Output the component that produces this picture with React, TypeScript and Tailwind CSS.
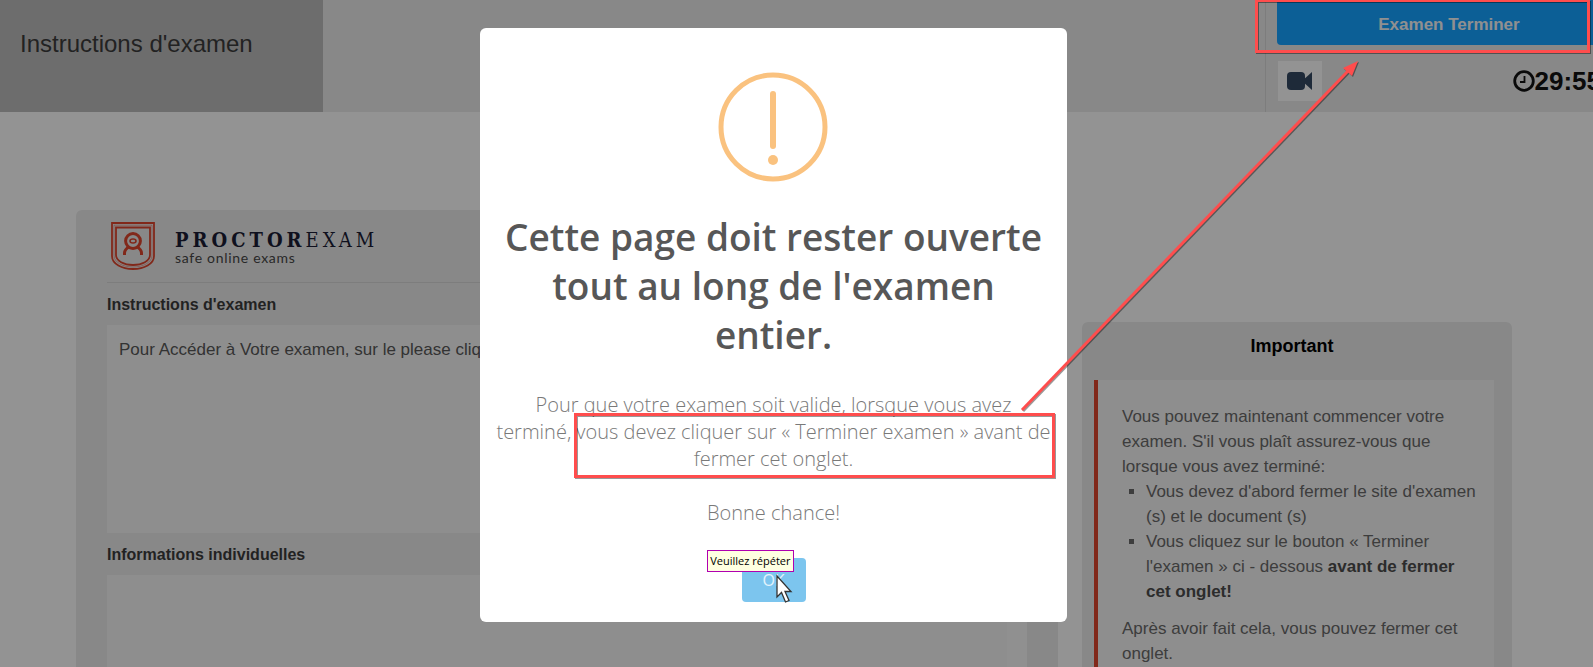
function Logo() {
  return (
    <div className="flex items-center gap-5 pl-1">
      <svg className="h-12 w-11 shrink-0" viewBox="0 0 44 48" fill="none" stroke="#d8432c">
        <path d="M1 1H43V34C43 42 33 47 22 47C11 47 1 42 1 34Z" strokeWidth="1.8" />
        <path d="M5 5.5H39V33C39 39 31 43 22 43C13 43 5 39 5 33Z" strokeWidth="1.8" />
        <path d="M3 3.2H41V33.5C41 40.5 32 45 22 45C12 45 3 40.5 3 33.5Z" strokeWidth="1" opacity="0.4" />
        <circle cx="22" cy="19" r="7.4" strokeWidth="3" />
        <ellipse cx="22" cy="19" rx="3" ry="2" strokeWidth="1.6" />
        <path d="M13.5 33V31C13.5 28 16 26 18.5 24.5M30.5 33V31C30.5 28 28 26 25.5 24.5" strokeWidth="3" />
      </svg>
      <div className="pt-1 text-[#1a1b33]">
        <div className="font-['DejaVu_Serif_Condensed','DejaVu_Serif',serif] text-xl leading-5 tracking-[0.2em]">
          <b>PROCTOR</b>EXAM
        </div>
        <div className="font-[Lato,sans-serif] text-sm leading-4 tracking-wider text-[#444]">
          safe online exams
        </div>
      </div>
    </div>
  );
}

function Header() {
  return (
    <header className="flex h-28 bg-[#e3e3e3]">
      <div className="w-[323px] shrink-0 bg-[#b6b6b6] px-5 pt-7">
        <h1 className="text-2xl leading-8 text-[#3a3a3a]">Instructions d'examen</h1>
      </div>
      <div className="ml-auto w-[328px] shrink-0 overflow-hidden border-l border-[#d0d0d0] pl-[11px]">
        <div className="w-[344px]">
          <button className="h-[45px] w-full rounded-b-sm bg-[#149efb] pt-1 text-[17px] font-bold text-[#f0f0f0]">
            Examen Terminer
          </button>
          <div className="mt-4 flex items-center justify-between pr-5">
            <button aria-label="Caméra" className="ml-px flex h-10 w-11 items-center justify-center bg-[#f5f5f5]">
              <svg className="h-5 w-7" viewBox="0 0 28 20" fill="#33475f">
                <rect x="1" y="1" width="18" height="18" rx="4" />
                <path d="M16 10L26 1V19Z" />
              </svg>
            </button>
            <div className="flex items-center text-[26px] leading-8 font-bold text-[#111]">
              <svg className="h-[22px] w-[22px]" viewBox="0 0 22 22" fill="none" stroke="#111">
                <circle cx="11" cy="11" r="9.3" strokeWidth="2.8" />
                <path d="M11.5 6V12H7" strokeWidth="1.8" />
              </svg>
              29:55
            </div>
          </div>
        </div>
      </div>
    </header>
  );
}

function ImportantCard() {
  return (
    <aside className="mt-28 w-[430px] shrink-0 rounded-md bg-[#e3e3e3] pt-3 pr-[18px] pb-10 pl-3">
      <h2 className="pr-1 text-center text-lg leading-6 font-bold text-black">Important</h2>
      <div className="mt-[22px] border-l-4 border-[#d8432c] bg-[#ededed] pt-6 pr-3 pb-10 pl-6 text-[17px] leading-[25px] text-[#666]">
        <p>
          Vous pouvez maintenant commencer votre examen. S'il vous plaît assurez-vous que lorsque vous avez terminé:
        </p>
        <ul className="list-[square] pl-6">
          <li>Vous devez d'abord fermer le site d'examen (s) et le document (s)</li>
          <li>
            Vous cliquez sur le bouton « Terminer l'examen » ci - dessous{" "}
            <b className="text-[#4a4a4a]">avant de fermer cet onglet!</b>
          </li>
        </ul>
        <p className="mt-3">Après avoir fait cela, vous pouvez fermer cet onglet.</p>
      </div>
    </aside>
  );
}

function Modal() {
  return (
    <div className="absolute inset-0 flex items-start justify-center bg-black/40 pt-7 pr-[46px] font-['Open_Sans',sans-serif]">
      <div role="dialog" className="flex w-[587px] flex-col items-center rounded-md bg-white px-4 pt-11 pb-5 text-center">
        <svg className="h-28 w-28" viewBox="0 0 112 112" fill="none">
          <circle cx="55" cy="55" r="52" stroke="#fac27f" strokeWidth="5" />
          <path d="M55 22V74" stroke="#fac27f" strokeWidth="6" strokeLinecap="round" />
          <circle cx="55" cy="88" r="5" fill="#fac27f" />
        </svg>
        <h2 className="mt-7 text-[37px] leading-[49px] font-semibold text-[#575757]">
          Cette page doit rester ouverte tout au long de l'examen entier.
        </h2>
        <div className="mt-8 text-xl leading-[27px] font-light text-[#797979]">
          <p>
            Pour que votre examen soit valide, lorsque vous avez terminé, vous devez cliquer sur « Terminer examen »
            avant de fermer cet onglet.
          </p>
          <p className="mt-[27px]">Bonne chance!</p>
        </div>
        <div className="relative mt-8">
          <button className="h-11 w-16 rounded-sm bg-[#7cc5ee] text-base font-medium text-white/80">OK</button>
          <span
            role="tooltip"
            className="absolute -top-2 right-3 border border-[#b000b0] bg-[#ffffe1] px-[2px] text-[11px] leading-5 whitespace-nowrap text-black"
          >
            Veuillez répéter
          </span>
          <svg className="absolute top-4 left-8 h-8 w-5" viewBox="0 0 20 32" fill="#fff" stroke="#333" strokeWidth="1.3">
            <path d="M3 2V23L7.5 18.5L11.5 28L15 26.5L11 17.5H17Z" />
          </svg>
        </div>
      </div>
    </div>
  );
}

// red frames and arrow pointing from the modal text to the button
function Annotations() {
  return (
    <svg className="pointer-events-none absolute top-0 right-0 h-[667px] w-[1593px] drop-shadow-[1px_1px_0px_rgba(0,0,0,0.4)]" viewBox="0 0 1593 667" fill="none">
      <g stroke="#ff4d4d" strokeWidth="3">
        <rect x="1256.5" y="0.5" width="332" height="51" />
        <rect x="575.5" y="414.5" width="478" height="62" />
        <path d="M1022 410L1349 70" />
      </g>
      <path d="M1358 61L1352 76L1343 68Z" fill="#ff4d4d" />
    </svg>
  );
}

export default function App() {
  return (
    <div className="relative h-screen overflow-hidden bg-[#f5f5f5] font-['Liberation_Sans',Arial,sans-serif]">
      <Header />
      <main className="flex items-start gap-6 pt-[98px] pr-[81px] pl-[76px]">
        <section className="min-w-0 flex-1 rounded-md bg-[#e3e3e3] px-[31px] pt-3 pb-10">
          <Logo />
          <hr className="mt-3 border-[#d0d0d0]" />
          <h2 className="mt-[10px] text-base leading-6 font-bold text-[#3a3a3a]">Instructions d'examen</h2>
          <div className="mt-2 h-52 border-r-[20px] border-[#f1f1f1] bg-[#ededed] px-3 py-[13px] text-[17px] leading-6 text-[#555]">
            Pour Accéder à Votre examen, sur le please cliquez
          </div>
          <h2 className="mt-[10px] text-base leading-6 font-bold text-[#3a3a3a]">Informations individuelles</h2>
          <div className="mt-2 h-52 border-r-[20px] border-[#f1f1f1] bg-[#ededed]" />
        </section>
        <ImportantCard />
      </main>
      <Modal />
      <Annotations />
    </div>
  );
}
